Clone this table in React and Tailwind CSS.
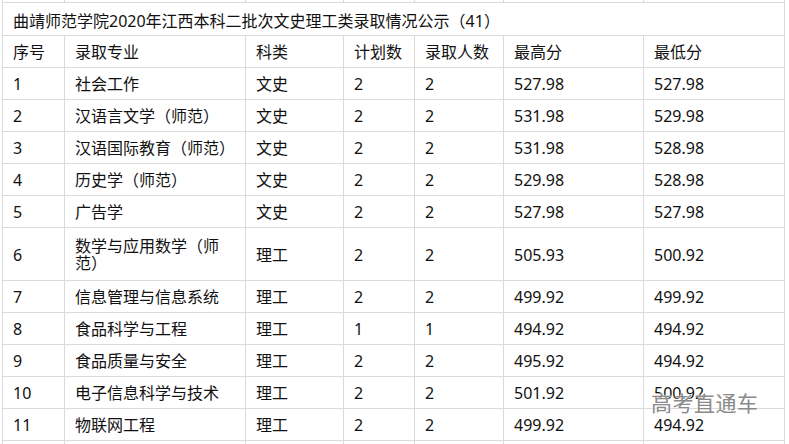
import React from "react";

const rows = [
  ["1", "社会工作", "文史", "2", "2", "527.98", "527.98"],
  ["2", "汉语言文学（师范）", "文史", "2", "2", "531.98", "529.98"],
  ["3", "汉语国际教育（师范）", "文史", "2", "2", "531.98", "528.98"],
  ["4", "历史学（师范）", "文史", "2", "2", "529.98", "528.98"],
  ["5", "广告学", "文史", "2", "2", "527.98", "527.98"],
  ["6", "数学与应用数学（师范）", "理工", "2", "2", "505.93", "500.92"],
  ["7", "信息管理与信息系统", "理工", "2", "2", "499.92", "499.92"],
  ["8", "食品科学与工程", "理工", "1", "1", "494.92", "494.92"],
  ["9", "食品质量与安全", "理工", "2", "2", "495.92", "494.92"],
  ["10", "电子信息科学与技术", "理工", "2", "2", "501.92", "500.92"],
  ["11", "物联网工程", "理工", "2", "2", "499.92", "494.92"],
];

const header = ["序号", "录取专业", "科类", "计划数", "录取人数", "最高分", "最低分"];

function Cell({ children, tall, h = "h-[31px]" }) {
  return (
    <div
      className={`bg-white flex items-center pl-[10px] pr-[8px] ${tall ? "h-[52px]" : h} leading-[17px] pt-[2px]`}
    >
      <span>{children}</span>
    </div>
  );
}

export default function App() {
  return (
    <div
      className="relative w-[789px] h-[444px] overflow-hidden bg-white text-[16px] text-[#111]"
      style={{ fontFamily: '"Noto Sans", "Noto Sans CJK SC", sans-serif' }}
    >
      <div className="ml-[2px] w-[783px] bg-[#dadada] px-px grid grid-cols-[61px_180px_97px_70px_88px_139px_140px] gap-px">
        {header.map((_, i) => (
          <div key={"p" + i} className="bg-white h-[2px]" />
        ))}
        <div className="col-span-7 bg-white h-[32px] flex items-center pl-[10px] pt-[3px]">
          曲靖师范学院2020年江西本科二批次文史理工类录取情况公示（41）
        </div>
        {header.map((t) => (
          <Cell key={t}>{t}</Cell>
        ))}
        {rows.map((r) =>
          r.map((c, j) => (
            <Cell key={r[0] + "-" + j} tall={r[0] === "6"}>
              {c}
            </Cell>
          ))
        )}
        {header.map((_, i) => (
          <div key={"b" + i} className="bg-white h-[20px]" />
        ))}
      </div>
      <div
        className="absolute left-[651px] top-[390px] text-[21px] leading-[24px] text-[#8a8a8a] tracking-[0.5px]"
        style={{ fontFamily: '"Noto Sans CJK SC", sans-serif', textShadow: "0 0 2px #fff, 0 0 1px #fff" }}
      >
        高考直通车
      </div>
    </div>
  );
}
